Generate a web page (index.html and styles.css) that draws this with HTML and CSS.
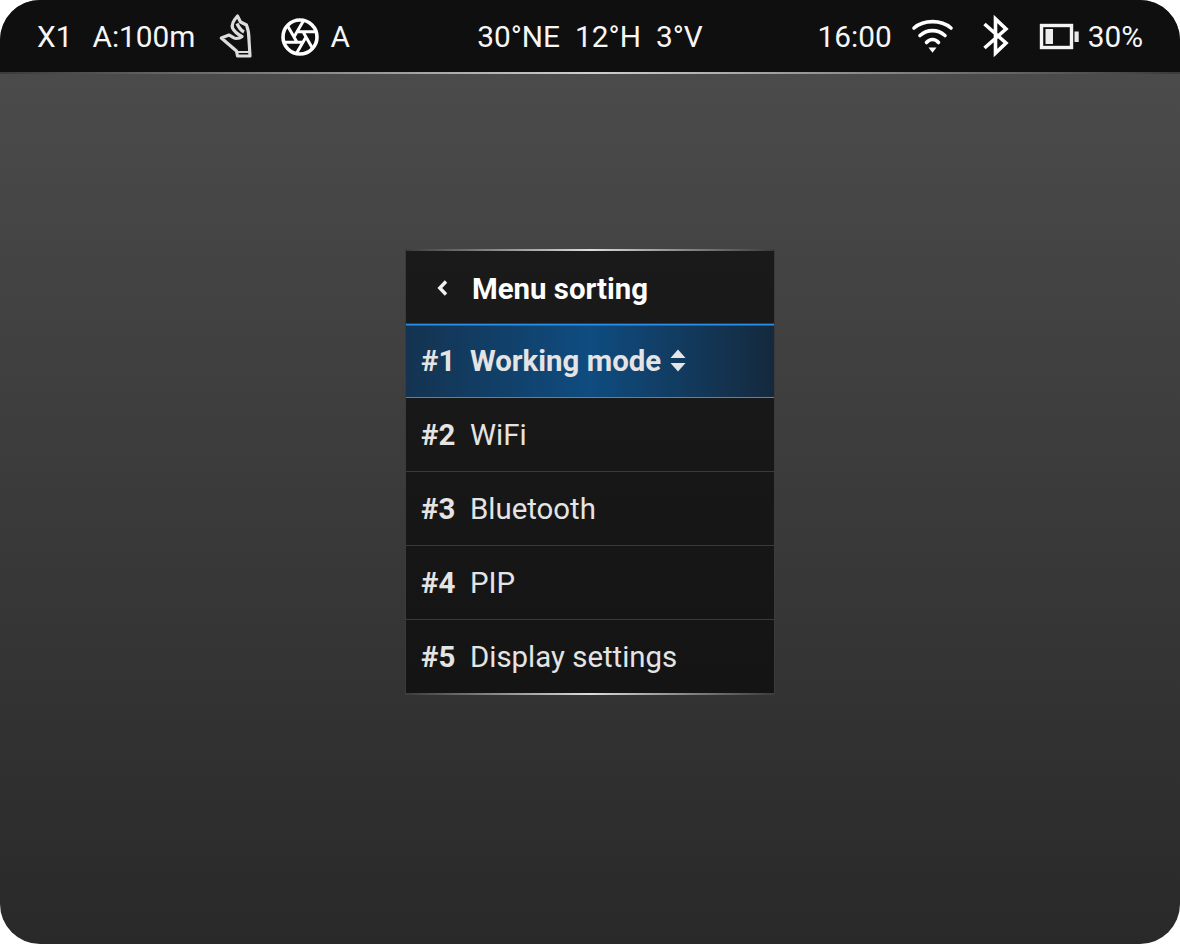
FILE: index.html
```html
<!DOCTYPE html>
<html lang="en">
<head>
<meta charset="utf-8">
<title>Menu sorting</title>
<link rel="stylesheet" href="styles.css">
</head>
<body>
<div class="screen">
  <header class="status">
    <div class="group left">
      <span class="x1">X1</span>
      <span class="dist">A:100m</span>
      <svg class="hand" width="44" height="50" viewBox="0 0 44 50" fill="none" stroke="#dcdcdc" stroke-width="3.2" stroke-linejoin="round"><path d="M23.5 4 L26.5 10 L32.5 13 C34.5 18 35 23 35 28 L36 44 L23.5 44 L22.5 39 L7.3 26 L15 23 C17.5 24 19.5 26.5 22 26.5 C24.5 26.5 26.5 26 28 24.5 C25 23 20.5 20 18.5 16 C17.5 13 19 9 23.5 4 Z"/><path d="M23 11.5 C24.5 15 26.5 18 30 20"/><path d="M23.5 40 L35.5 40" stroke-width="2"/></svg>
      <svg class="aperture" width="38" height="38" viewBox="-19 -19 38 38" fill="none" stroke="#fff" stroke-width="3"><circle r="17" stroke-width="3.6"/><path d="M6 0 L-3.6 16.6 M3 5.2 L-16.2 5.2 M-3 5.2 L-12.6 -11.4 M-6 0 L3.6 -16.6 M-3 -5.2 L16.2 -5.2 M3 -5.2 L12.6 11.4"/></svg>
      <span class="mode">A</span>
    </div>
    <div class="group center">
      <span>30°NE</span><span>12°H</span><span>3°V</span>
    </div>
    <div class="group right">
      <span class="time">16:00</span>
      <svg class="wifi" width="50" height="46" viewBox="0 0 50 46" fill="none" stroke="#fff" stroke-width="3.6" stroke-linecap="round"><path d="M6 14 C16 5.5 33 5.5 43 14"/><path d="M12 21.5 C19.5 15 29.5 15 37 21.5"/><path d="M18.5 28.5 C22 24.5 27 24.5 30.5 28.5"/><path d="M20.5 33.5 L28.5 33.5 L24.5 38.8 Z" fill="#fff" stroke="none"/></svg>
      <svg class="bt" width="40" height="46" viewBox="0 0 40 46" fill="none" stroke="#fff" stroke-width="3.6"><path d="M8.5 10 L30 29 L19.5 39 L19.5 5 L30 15 L8.5 34"/></svg>
      <svg class="batt" width="48" height="38" viewBox="0 0 48 38" fill="none"><rect x="5.5" y="7.5" width="30" height="22" stroke="#f4f4f4" stroke-width="3.4"/><rect x="9.5" y="11" width="7.5" height="15" fill="#ececec"/><rect x="38.5" y="13.5" width="4.2" height="10.5" fill="#e8e8e8"/></svg>
      <span class="level">30%</span>
    </div>
  </header>
  <div class="edge"></div>
  <main class="stage">
    <section class="menu">
      <div class="menu-head">
        <svg class="back" width="12" height="18" viewBox="0 0 12 18" fill="none" stroke="#f2f2f2" stroke-width="3.4"><path d="M10 2.5 L3.8 9 L10 15.5"/></svg>
        <span class="title">Menu sorting</span>
      </div>
      <div class="row active">
        <span class="num">#1</span>
        <span class="name">Working mode</span>
        <svg class="sort" width="16" height="26" viewBox="0 0 16 26" fill="#e6e6e6"><path d="M8 1.5 L15.5 10 L0.5 10 Z"/><path d="M0.5 15 L15.5 15 L8 23.5 Z"/></svg>
      </div>
      <div class="row"><span class="num">#2</span><span class="name">WiFi</span></div>
      <div class="row"><span class="num">#3</span><span class="name">Bluetooth</span></div>
      <div class="row"><span class="num">#4</span><span class="name">PIP</span></div>
      <div class="row"><span class="num">#5</span><span class="name">Display settings</span></div>
    </section>
  </main>
</div>
</body>
</html>
```
FILE: styles.css
```css
* { box-sizing: border-box; }
html, body { margin: 0; padding: 0; background: #fff; }
body { width: 1180px; height: 944px; overflow: hidden; font-family: Roboto, "Liberation Sans", sans-serif; }
.screen {
  width: 1180px; height: 944px; border-radius: 40px; overflow: hidden;
  display: flex; flex-direction: column;
  background: linear-gradient(180deg, #4b4b4b 72px, #292929 100%);
}
.status {
  height: 72px; flex: none; background: #0f0f0f; color: #f6f6f6;
  display: grid; grid-template-columns: 1fr auto 1fr; align-items: center;
  padding: 0 37px; font-size: 29.8px; line-height: 74px;
}
.group { display: flex; align-items: center; }
.dist { margin-left: 20px; }
.hand { margin-left: 19px; }
.aperture { margin-left: 23px; }
.mode { margin-left: 11px; }
.center { gap: 15px; }
.right { justify-content: flex-end; }
.wifi { margin-left: 16px; }
.bt { margin-left: 18px; }
.batt { margin-left: 20px; }
.level { margin-left: 4px; }
.edge {
  height: 2px; flex: none;
  background: linear-gradient(90deg, #3a3a3a 0%, #cfcfcf 50%, #3a3a3a 100%);
}
.stage { flex: 1; display: flex; justify-content: center; align-items: flex-start; padding-top: 175px; }
.menu {
  width: 370px; height: 446px;
  background: linear-gradient(180deg, #1a1a1a 0%, #141414 100%);
  display: flex; flex-direction: column; position: relative;
  border-left: 1px solid #3a3a3a; border-right: 1px solid #3a3a3a;
  border-top: 2px solid #3c3c3c; border-bottom: 2px solid #3c3c3c;
}
.menu::before, .menu::after {
  content: ""; position: absolute; left: 0; right: 0; height: 2px;
  background: linear-gradient(90deg, #3c3c3c 0%, #dcdcdc 50%, #3c3c3c 100%);
}
.menu::before { top: -2px; }
.menu::after { bottom: -2px; }
.menu-head {
  height: 72px; flex: none; display: flex; align-items: center; padding: 3px 0 0 30px;
  color: #fff;
}
.title { margin-left: 24px; font-size: 29.4px; font-weight: 700; }
.back { margin-top: -1px; }
.row {
  height: 74px; flex: none; display: flex; align-items: center; padding-left: 15px;
  border-top: 1px solid #3a3a3a; color: #e4e4e4; font-size: 29.4px;
}
.num { width: 49px; font-weight: 700; }
.active {
  font-weight: 700;
  background: linear-gradient(90deg, #143350 0%, #0f4c80 50%, #15293d 100%);
  box-shadow: inset 0 1.5px 0 #2a8fe8;
}
.active + .row { border-top-color: #2a8fe8; }
.sort { margin-left: 9px; }
```
